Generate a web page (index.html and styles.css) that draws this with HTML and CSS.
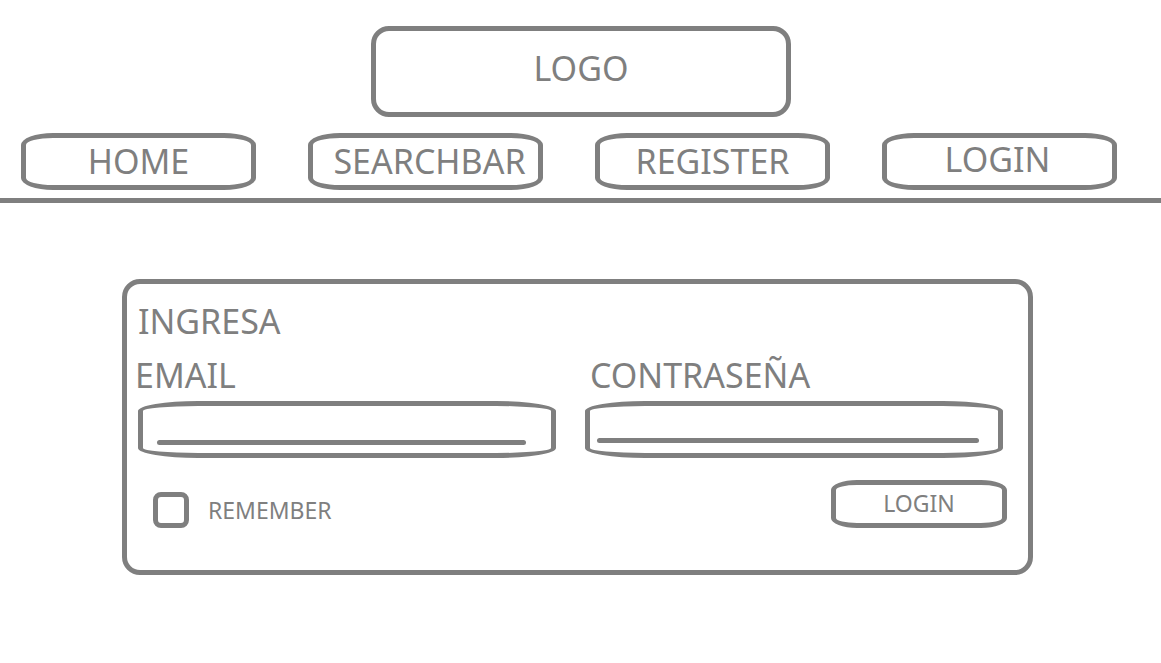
FILE: index.html
```html
<!DOCTYPE html>
<html lang="es">
<head>
<meta charset="utf-8">
<meta name="viewport" content="width=device-width, initial-scale=1">
<title>Ingresa</title>
<link rel="stylesheet" href="styles.css">
</head>
<body>
<header class="header">
  <a class="logo" href="#">LOGO</a>
  <nav class="nav">
    <a class="nav-item" href="#">HOME</a>
    <a class="nav-item nav-item-search" href="#">SEARCHBAR</a>
    <a class="nav-item" href="#">REGISTER</a>
    <a class="nav-item nav-item-login" href="#">LOGIN</a>
  </nav>
</header>
<main class="main">
  <form class="panel">
    <h1 class="title">INGRESA</h1>
    <div class="fields">
      <div class="field">
        <label class="label" for="email">EMAIL</label>
        <div class="box box-email"><input class="input" id="email" type="email"></div>
      </div>
      <div class="field">
        <label class="label label-password" for="password">CONTRASEÑA</label>
        <div class="box box-password"><input class="input" id="password" type="password"></div>
      </div>
    </div>
    <div class="actions">
      <div class="remember">
        <input class="check" id="remember" type="checkbox">
        <label for="remember">REMEMBER</label>
      </div>
      <button class="submit" type="submit">LOGIN</button>
    </div>
  </form>
</main>
</body>
</html>
```
FILE: styles.css
```css
:root {
  --ink: #7f7f7f;
  --line: 5px solid var(--ink);
}

* {
  box-sizing: border-box;
}

body {
  margin: 0;
  background: #fff;
  color: var(--ink);
  font-family: "Noto Sans", sans-serif;
  font-size: 34px;
  font-weight: 400;
  line-height: 40px;
}

.header {
  display: flex;
  flex-direction: column;
  align-items: center;
  gap: 16px;
  padding: 26px 44px 8px 21px;
  border-bottom: var(--line);
}

.logo {
  width: 38.4%;
  min-width: 200px;
  margin-left: 24px;
  padding: 17px 0 24px;
  border: var(--line);
  border-radius: 18px;
  color: inherit;
  text-align: center;
  text-decoration: none;
}

.nav {
  display: grid;
  grid-template-columns: repeat(4, 1fr);
  gap: 52px;
  width: 100%;
}

.nav-item {
  padding: 3px 0 4px;
  border: var(--line);
  border-radius: 32px / 12px;
  color: inherit;
  text-align: center;
  text-decoration: none;
}

.nav-item-search {
  padding-left: 8px;
}

.nav-item-login {
  padding: 1px 4px 6px 0;
}

.main {
  padding: 76px 128px 88px 122px;
}

.panel {
  padding: 17px 25px 42px 11px;
  border: var(--line);
  border-radius: 18px;
}

.title {
  margin: 0 0 14px;
  font-size: inherit;
  font-weight: inherit;
}

.fields {
  display: grid;
  grid-template-columns: 1fr 1fr;
  gap: 29px;
}

.field {
  display: flex;
  flex-direction: column;
  gap: 6px;
}

.label {
  margin-left: -3px;
}

.label-password {
  margin-left: 5px;
}

.box {
  display: flex;
  flex-direction: column;
  border: var(--line);
  border-radius: 60px / 10px;
}

.box::after {
  content: "";
  height: 5px;
  border-radius: 3px;
  background: var(--ink);
}

.box-email {
  padding: 2px 25px 8px 14px;
}

.box-password {
  padding: 0 19px 10px 7px;
}

.input {
  width: 100%;
  height: 32px;
  padding: 0 8px;
  border: 0;
  outline: 0;
  background: none;
  color: inherit;
  font: inherit;
  font-size: 24px;
}

.actions {
  display: flex;
  align-items: flex-end;
  justify-content: space-between;
  margin: 22px -4px 0 15px;
  font-size: 23px;
}

.remember {
  display: flex;
  align-items: center;
  gap: 19px;
  height: 36px;
}

.check {
  appearance: none;
  width: 36px;
  height: 36px;
  margin: 0;
  border: var(--line);
  border-radius: 8px;
}

.check:checked {
  background: var(--ink);
}

.submit {
  width: 176px;
  height: 48px;
  padding: 0 0 2px;
  border: var(--line);
  border-radius: 26px / 10px;
  background: none;
  color: inherit;
  font: inherit;
  line-height: 36px;
}
```
